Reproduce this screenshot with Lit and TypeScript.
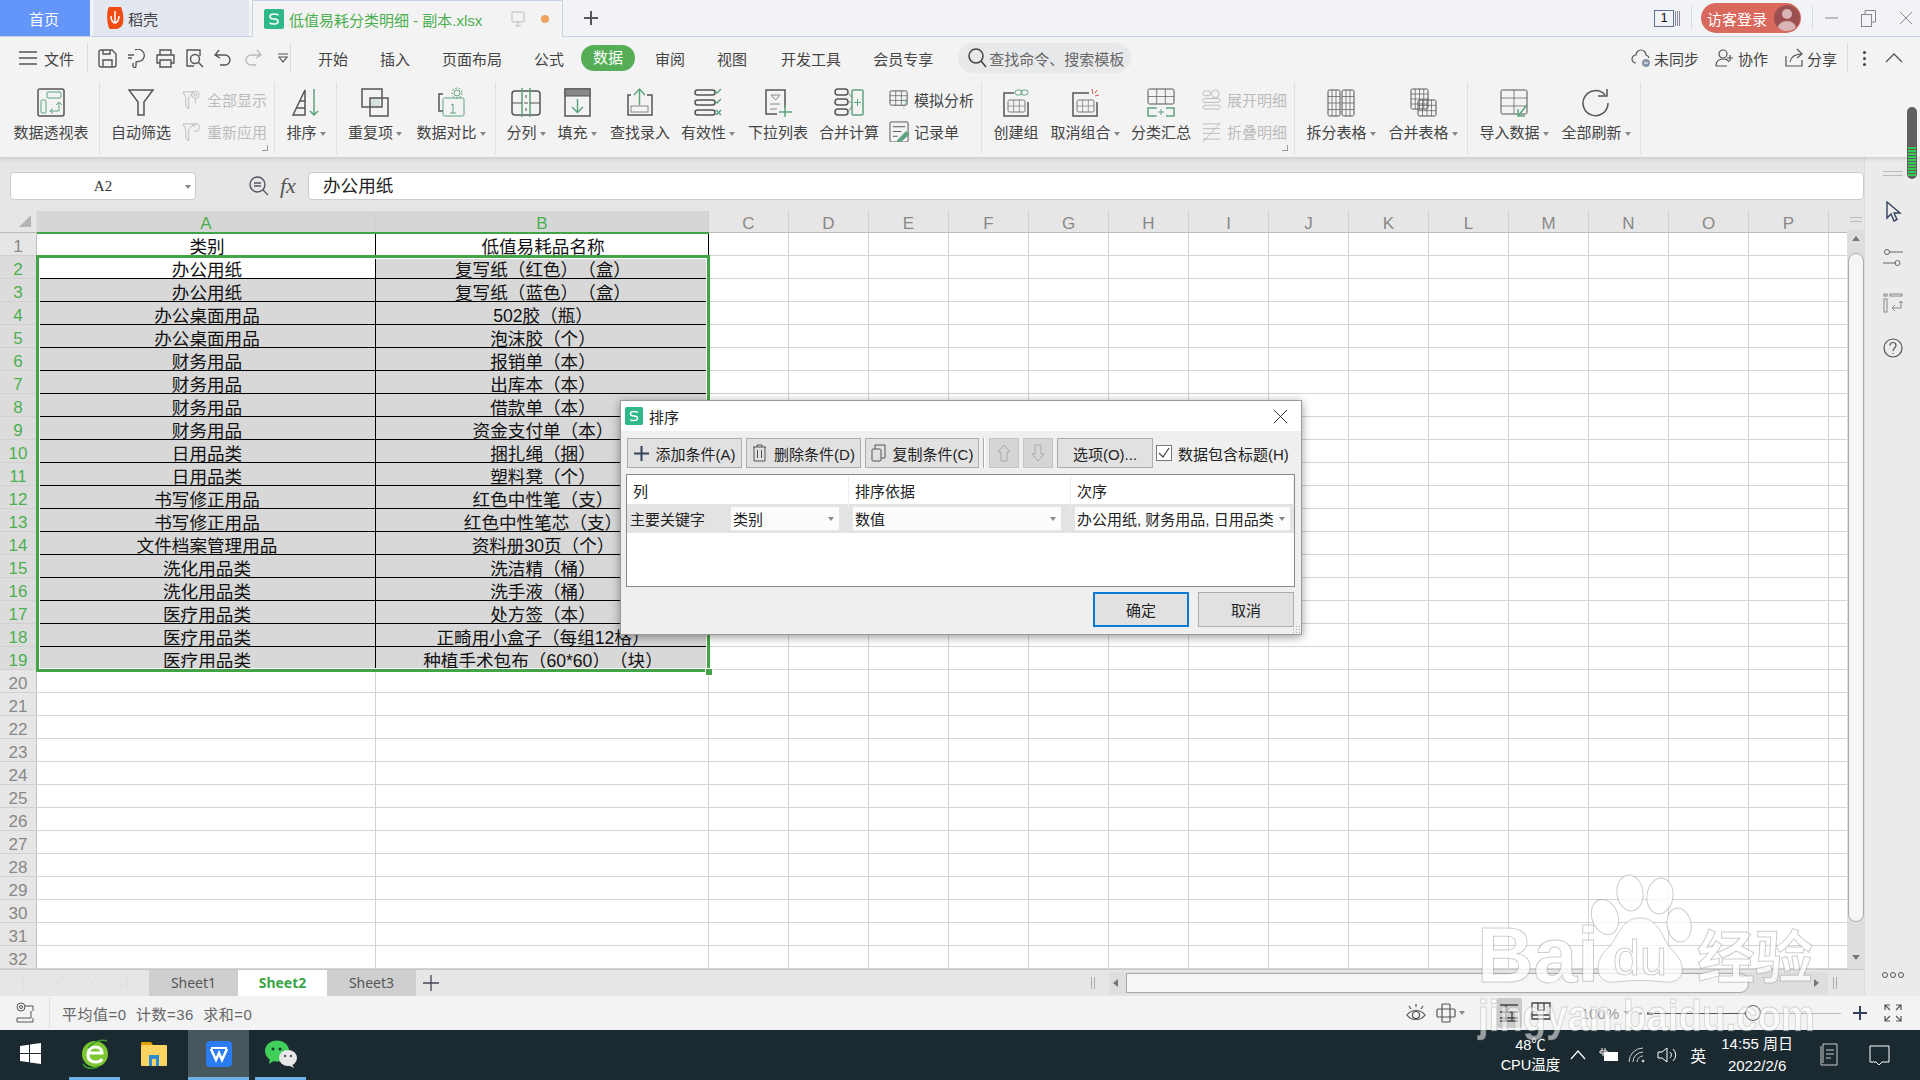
import {LitElement, html, css, svg} from 'lit';
import {customElement} from 'lit/decorators.js';

const G = '#5fa37e';
const D = '#555';

// draws a small table: outer box plus inner lines
const grid = (x: number, y: number, w: number, h: number, cols: number, rows: number, c = D) => {
  const out = [svg`<rect x=${x} y=${y} width=${w} height=${h} rx="1.5" stroke=${c} fill="none"/>`];
  for (let i = 1; i < cols; i++) {
    const px = x + (w / cols) * i;
    out.push(svg`<path d="M${px} ${y}V${y + h}" stroke=${c} fill="none" opacity=".7"/>`);
  }
  for (let i = 1; i < rows; i++) {
    const py = y + (h / rows) * i;
    out.push(svg`<path d="M${x} ${py}H${x + w}" stroke=${c} fill="none" opacity=".7"/>`);
  }
  return out;
};

const ICONS: Record<string, unknown> = {
  pivot: svg`<rect x="2" y="2" width="26" height="27" rx="2" stroke-width="1.5"/><rect x="11" y="5" width="14" height="6" rx="1" stroke=${G}/><rect x="5" y="13" width="5" height="13" rx="1" stroke=${G}/><path d="M14 24h9v-9M20 18l3-3 3 3M14 24l3-2.500M14 24l3 2.500" stroke=${G}/>`,
  filter: svg`<path d="M3 3H27L18 15V28H12V15Z" stroke-width="1.500"/>`,
  sort: svg`<path d="M2 28L14 3V28ZM9 14H14M5.500 21H14" stroke-width="1.500"/><path d="M23 2V28M19 24l4 4 4-4" stroke=${G} stroke-width="1.500"/>`,
  dup: svg`<rect x="10" y="11" width="10" height="9" fill="#d5e3da" stroke="none"/><rect x="2" y="2" width="20" height="18" stroke-width="1.500"/><rect x="10" y="11" width="18" height="18" stroke-width="1.500"/>`,
  compare: svg`<path d="M7 7H3V24H7" stroke-width="1.500"/><rect x="7" y="11" width="21" height="18" rx="1.500" stroke=${G}/><circle cx="21" cy="6" r="3" stroke=${G}/><circle cx="21" cy="6" r="5" stroke=${G} stroke-dasharray="2 1.500"/><path d="M15 18l2-1V26M14 26h6" stroke=${G}/>`,
  split: svg`<rect x="1" y="4" width="28" height="24" rx="3" stroke-width="1.500"/><path d="M11 1V31M19 1V31" stroke=${G} stroke-width="1.500"/><path d="M1 16H11M19 16H29M13 16h4M15 8v3M15 21v3" />`,
  fill: svg`<rect x="3" y="2" width="25" height="27" stroke-width="1.500"/><rect x="3" y="2" width="25" height="7" fill="#888"/><path d="M15.500 12V25M10 20l5.500 5.500L21 20" stroke=${G} stroke-width="1.500"/>`,
  lookup: svg`<path d="M6 8H3V28H27V8H22" stroke-width="1.500"/><path d="M14.500 18V3M9 8l5.500-6L20 8" stroke=${G} stroke-width="1.500"/><rect x="6" y="19" width="17" height="6" stroke="#888"/>`,
  valid: svg`<rect x="2" y="3" width="20" height="5" rx="2.500" stroke-width="1.500"/><rect x="2" y="13" width="20" height="5" rx="2.500" stroke-width="1.500"/><rect x="2" y="23" width="20" height="5" rx="2.500" stroke-width="1.500"/><path d="M22 4l2 2 4-4M22 14l2 2 4-4M23 23l5 5M28 23l-5 5" stroke=${G} stroke-width="1.500"/>`,
  drop: svg`<path d="M22 21V3H3V27H14" stroke-width="1.500"/><path d="M8 8H17L12.500 13ZM7 17H17M7 22H14" stroke="#888"/><path d="M22 18V31M16 25H29" stroke=${G} stroke-width="1.500"/>`,
  merge: svg`<rect x="1" y="2" width="13" height="6" rx="3" stroke-width="1.500"/><rect x="1" y="12" width="13" height="6" rx="3" stroke-width="1.500"/><rect x="1" y="22" width="13" height="6" rx="3" stroke-width="1.500"/><rect x="18" y="3" width="11" height="25" rx="1" stroke=${G} stroke-width="1.500"/><path d="M14 5l4 6M14 15h4M14 25l4-6" stroke="#888"/><path d="M23.500 12v7M20 15.500h7" stroke=${G}/>`,
  group: svg`<path d="M13 6H3V29H27V15" stroke-width="1.500"/>${grid(7, 13, 17, 12, 3, 2, '#777')}<rect x="14" y="3" width="7" height="5" rx="2.500" stroke=${G}/><rect x="20" y="3" width="7" height="5" rx="2.500" stroke=${G}/>`,
  ungroup: svg`<path d="M19 6H3V29H27V15" stroke-width="1.500"/>${grid(7, 13, 17, 12, 3, 2, '#777')}<path d="M22 2l1 5M29 8l-4 1M27 3l-2 3" stroke="#d9534f"/>`,
  subtotal: svg`${grid(2, 2, 26, 15, 3, 2)}<path d="M10 21H2V29H10M20 21H28V29H20" stroke=${G} stroke-width="1.500"/><path d="M10 21h1M10 29h1M15 22v6M12 25h6" stroke=${G}/>`,
  splitT: svg`${grid(2, 3, 12, 26, 3, 4)}${grid(16, 3, 12, 26, 3, 4)}`,
  mergeT: svg`${grid(3, 2, 17, 20, 4, 4)}${grid(10, 13, 18, 16, 4, 3)}`,
  importD: svg`${grid(2, 3, 26, 24, 2, 3)}<path d="M28 18L19 29M19 22V29H26" stroke=${G} stroke-width="1.500"/>`,
  refresh: svg`<path d="M24 8A12.500 12.500 0 1 0 27 16" stroke-width="1.500"/><path d="M17 7H26V0" stroke-width="1.500" transform="translate(0 2)"/>`,
  wif: svg`${grid(1, 2, 18, 15, 3, 3)}<path d="M13 14c0-3 5-3 5 0 0 2-2.500 2-2.500 4.500M15.500 20v1" stroke=${G}/>`,
  rec: svg`<rect x="1" y="1" width="19" height="21" rx="1"/><path d="M4 6H17M4 11H13M4 16H9"/><path d="M9 20L18 11l3 3-9 8H9Z" fill=${G} stroke=${G}/>`,
  show: svg`<path d="M1 3H12L7 9V21L4 18V9ZM14 10V15"/><circle cx="14" cy="6" r="4"/><circle cx="14" cy="6" r="1.500"/>`,
  reapply: svg`<path d="M1 3H12L7 9V21L4 18V9Z"/><path d="M12 10a4 4 0 1 0-1-5M14 2v3h-3M15 7l1 1"/>`,
  expand: svg`<rect x="1" y="2" width="8" height="5" rx="2.500"/><circle cx="14" cy="5" r="4"/><rect x="1" y="10" width="18" height="4" rx="2"/><rect x="1" y="17" width="18" height="4" rx="2"/>`,
  fold: svg`<path d="M1 3H19M1 8H19M1 13H19M1 19H19M1 22L19 2"/>`,
};

const ico = (name: string, size = 30, off = false) => html`<svg class="ic ${off ? 'off' : ''}" width=${size} height=${size} viewBox="0 0 ${size === 30 ? 30 : 22} ${size === 30 ? 30 : 22}">${ICONS[name]}</svg>`;

const sIcon = (size: number) => html`<svg width=${size} height=${size} viewBox="0 0 20 20"><rect width="20" height="20" rx="2" fill="#2fb888"/><path d="M14 6.500C14 5.500 12 5 10 5S6 5.500 6 7.500 8 10 10 10s4 .5 4 2.500-2 2.500-4 2.500-4-.5-4-1.500" fill="none" stroke="#fff" stroke-width="1.500"/></svg>`;

type Big = {kind: 'big'; w: number; icon: string; label: string; caret?: boolean};
type Stack = {kind: 'stack'; w: number; off?: boolean; rows: [string, string][]; ml?: number};
type Group = {w: number; items: (Big | Stack)[]; corner?: boolean};

const big = (w: number, icon: string, label: string, caret = false): Big => ({kind: 'big', w, icon, label, caret});

const GROUPS: Group[] = [
  {w: 100, items: [big(102, 'pivot', '数据透视表')]},
  {w: 175, corner: true, items: [big(82, 'filter', '自动筛选'), {kind: 'stack', w: 93, off: true, rows: [['show', '全部显示'], ['reapply', '重新应用']]}]},
  {w: 62, items: [big(62, 'sort', '排序', true)]},
  {w: 159, items: [big(76, 'dup', '重复项', true), big(76, 'compare', '数据对比', true)]},
  {w: 486, items: [big(60, 'split', '分列', true), big(42, 'fill', '填充', true), big(84, 'lookup', '查找录入'), big(52, 'valid', '有效性', true), big(88, 'drop', '下拉列表'), big(54, 'merge', '合并计算'),
    {kind: 'stack', w: 93, ml: 13, rows: [['wif', '模拟分析'], ['rec', '记录单']]}]},
  {w: 313, corner: true, items: [big(68, 'group', '创建组'), big(70, 'ungroup', '取消组合', true), big(82, 'subtotal', '分类汇总'), {kind: 'stack', w: 93, off: true, rows: [['expand', '展开明细'], ['fold', '折叠明细']]}]},
  {w: 173, items: [big(92, 'splitT', '拆分表格', true), big(72, 'mergeT', '合并表格', true)]},
  {w: 173, items: [big(92, 'importD', '导入数据', true), big(72, 'refresh', '全部刷新', true)]},
];

const TABS = ['开始', '插入', '页面布局', '公式', '数据', '审阅', '视图', '开发工具', '会员专享'];

const ROWS: [string, string][] = [
  ['类别', '低值易耗品名称'],
  ['办公用纸', '复写纸（红色）（盒）'],
  ['办公用纸', '复写纸（蓝色）（盒）'],
  ['办公桌面用品', '502胶（瓶）'],
  ['办公桌面用品', '泡沫胶（个）'],
  ['财务用品', '报销单（本）'],
  ['财务用品', '出库本（本）'],
  ['财务用品', '借款单（本）'],
  ['财务用品', '资金支付单（本）'],
  ['日用品类', '捆扎绳（捆）'],
  ['日用品类', '塑料凳（个）'],
  ['书写修正用品', '红色中性笔（支）'],
  ['书写修正用品', '红色中性笔芯（支）'],
  ['文件档案管理用品', '资料册30页（个）'],
  ['洗化用品类', '洗洁精（桶）'],
  ['洗化用品类', '洗手液（桶）'],
  ['医疗用品类', '处方签（本）'],
  ['医疗用品类', '正畸用小盒子（每组12格）'],
  ['医疗用品类', '种植手术包布（60*60）（块）'],
];

const COLS = ['C', 'D', 'E', 'F', 'G', 'H', 'I', 'J', 'K', 'L', 'M', 'N', 'O', 'P'];

@customElement('app-root')
export class AppRoot extends LitElement {
  static styles = css`
    :host {
      display: block;
      width: 1920px;
      height: 1080px;
      position: relative;
      overflow: hidden;
      font-family: "Liberation Sans", "Noto Sans CJK SC", sans-serif;
      font-size: 15px;
      color: #444;
      background: #f3f3f3;
      text-spacing-trim: space-all;
    }
    svg { display: block; flex: none; }
    .ic { fill: none; stroke: #555; }
    .ic.off { stroke: #bbb; }
    .caret { display: inline-block; width: 0; height: 0; border: 3.5px solid transparent; border-top: 4px solid #888; border-bottom: 0; margin-left: 3px; vertical-align: middle; }

    .title { height: 37px; display: flex; background: #f1f3f7; border-bottom: 1px solid #c5d3e3; box-sizing: border-box; align-items: stretch; }
    .t-home { width: 90px; background: #6495f9; color: #fff; display: flex; align-items: center; justify-content: center; padding-right: 2px; box-sizing: border-box; }
    .t-doc { width: 156px; margin-left: 3px; background: #e3e7f0; display: flex; align-items: center; padding-left: 13px; box-sizing: border-box; gap: 4px; }
    .t-active { width: 311px; margin-left: 3px; height: 37px; background: #f3f3f3; border: 1px solid #c5d3e3; border-bottom: 0; box-sizing: border-box; display: flex; align-items: center; padding-left: 11px; color: #4caf50; }
    .t-active .name { margin-left: 5px; width: 221px; }
    .dot { width: 8px; height: 8px; border-radius: 50%; background: #f0a35e; margin-left: 15px; }
    .t-plus { margin-left: 20px; align-self: center; }
    .t-right { margin-left: auto; display: flex; align-items: center; }
    .one { width: 20px; height: 17px; border: 1.5px solid #5d7391; box-sizing: border-box; color: #111; font-size: 13px; line-height: 14px; text-align: center; }
    .one-bars { width: 6px; height: 15px; margin-left: 1px; background: repeating-linear-gradient(90deg, #889 0 1px, transparent 1px 2px); }
    .vsep { width: 1px; height: 24px; background: #d9dce2; }
    .vsep.first { margin-left: 10px; }
    .login { width: 100px; height: 30px; border-radius: 15px; background: #d9695c; color: #fff; display: flex; align-items: center; padding-left: 6px; box-sizing: border-box; margin: 0 11px 0 9px; font-size: 15px; justify-content: space-between; }
    .avatar { width: 26px; height: 26px; border-radius: 50%; background: #9c4f50; overflow: hidden; margin-right: 1px; }
    .win { display: flex; align-items: center; margin-left: 12px; gap: 23px; margin-right: 7px; }

    .menu { height: 42px; display: flex; align-items: center; background: #f3f3f3; }
    .file { display: flex; align-items: center; padding-left: 19px; width: 68px; gap: 7px; }
    .msep { width: 1px; height: 30px; background: #ddd; flex: none; }
    .quick { display: flex; align-items: center; padding-left: 10px; gap: 10px; width: 202px; box-sizing: border-box; }
    .quick .more { margin-left: 5px; }
    .tab-gap { width: 11px; flex: none; }
    .tab { padding: 0 16px; white-space: nowrap; }
    .tab.sel { padding: 3px 12px; margin: 0 4px 0 1px; background: #55ae56; color: #fff; border-radius: 13px; line-height: 20px; }
    .tab.dev { margin-left: 2px; }
    .search { margin-left: 9px; width: 173px; height: 30px; border-radius: 15px; background: #e8e9eb; display: flex; align-items: center; padding-left: 9px; box-sizing: border-box; gap: 2px; color: #666; white-space: nowrap; }
    .m-right { margin-left: auto; display: flex; align-items: center; }
    .m-act { display: flex; align-items: center; gap: 3px; margin-right: 16px; }
    .m-last { margin-left: -6px; }
    .dots { width: 3px; height: 3px; background: #444; border-radius: 50%; box-shadow: 0 -6px #444, 0 6px #444; margin: 0 19px 0 15px; }
    .collapse { margin-right: 17px; }

    .ribbon { height: 78px; display: flex; background: #f3f3f3; position: relative; z-index: 2; box-shadow: 0 2px 4px rgba(0,0,0,.12); }
    .group { height: 72px; border-right: 1px solid #e0e0e0; box-sizing: border-box; display: flex; position: relative; margin-top: 3px; flex: none; }
    .big { display: flex; flex-direction: column; align-items: center; flex: none; white-space: nowrap; padding-top: 5px; }
    .big span.lbl { margin-top: 5px; line-height: 22px; }
    .stack { display: flex; flex-direction: column; flex: none; padding-top: 6px; gap: 10px; white-space: nowrap; }
    .srow { display: flex; align-items: center; height: 22px; gap: 4px; }
    .stack.off { color: #bbb; }
    .corner { position: absolute; right: 6px; bottom: 3px; width: 5px; height: 5px; border-right: 1px solid #999; border-bottom: 1px solid #999; }

    .main { display: flex; height: 839px; }
    .left { width: 1864px; display: flex; flex-direction: column; flex: none; }
    .side { flex: 1; background: #ebebeb; border-left: 1px solid #ddd; display: flex; flex-direction: column; align-items: center; }
    .side-lines { width: 20px; height: 3px; border-top: 1px solid #bbb; border-bottom: 1px solid #bbb; margin-top: 14px; }
    .side svg { margin-top: 24px; }
    .side svg.cursor { margin-top: 25px; margin-left: 3px; }
    .side svg.help { margin-top: 25px; }
    .side .more { margin-top: auto; margin-bottom: 18px; display: flex; gap: 2px; }
    .side .more i { width: 4px; height: 4px; border: 1px solid #555; border-radius: 50%; }

    .fbar { height: 54px; background: #e6e6e6; display: flex; align-items: center; padding-top: 4px; box-sizing: border-box; }
    .namebox { width: 186px; height: 28px; margin-left: 10px; background: #fff; border: 1px solid #ccc; border-radius: 4px; box-sizing: border-box; display: flex; align-items: center; justify-content: center; font-family: "Liberation Serif", serif; color: #333; position: relative; }
    .namebox .caret { position: absolute; right: 4px; top: 12px; }
    .zoom { margin-left: 52px; }
    .fx { font-family: "Liberation Serif", serif; font-style: italic; font-size: 22px; color: #555; margin-left: 10px; width: 28px; }
    .finput { width: 1556px; height: 28px; background: #fff; border: 1px solid #ccc; border-radius: 4px; box-sizing: border-box; padding-left: 14px; line-height: 27px; font-size: 17.600px; color: #222; }

    .sheet { height: 758px; display: flex; background: #fff; }
    .grid { width: 1847px; position: relative; flex: none; overflow: hidden; }
    .row { display: flex; height: 23px; box-sizing: border-box; }
    .row.head { height: 22px; background: #e6e6e6; border-bottom: 1px solid #bbb; }
    .corner-cell { width: 37px; flex: none; position: relative; border-right: 1px solid #ddd; box-sizing: border-box; }
    .corner-cell::after { content: ""; position: absolute; right: 5px; bottom: 5px; border-style: solid; border-width: 0 0 12px 12px; border-color: transparent transparent #b5b5b5 transparent; }
    .ch { flex: none; text-align: center; border-right: 1px solid #d0d0d0; box-sizing: border-box; font-size: 17px; line-height: 25px; color: #888; width: 80px; overflow: hidden; }
    .ch.sel { background: #d6d6d6; color: #4caf50; }
    .ch.a { width: 339px; }
    .ch.b { width: 333px; }
    .rh { width: 37px; flex: none; background: #e6e6e6; border-right: 1px solid #c0c0c0; border-bottom: 1px solid #d0d0d0; box-sizing: border-box; text-align: center; font-size: 17px; line-height: 27px; color: #888; overflow: hidden; }
    .rh.sel { background: #dcdcdc; color: #4caf50; }
    .c { flex: none; box-sizing: border-box; border-right: 1px solid #d4d4d4; border-bottom: 1px solid #d4d4d4; width: 80px; overflow: hidden; }
    .c.d { text-align: center; font-size: 17.600px; line-height: 29px; padding-left: 2px; color: #111; border-right-color: #000; border-bottom-color: #000; background: #d8d8d8; white-space: nowrap; }
    .c.a { width: 339px; }
    .c.b { width: 333px; }
    .c.q { width: 18px; border-right: 0; }
    .c.w { background: #fff; }
    .sel-box { position: absolute; left: 36px; top: 44px; width: 674px; height: 417px; border: 3px solid #43a347; box-sizing: border-box; box-shadow: inset 0 0 0 1px #fff; }
    .sel-top { position: absolute; left: 37px; top: 21px; width: 672px; height: 2px; background: #43a347; }
    .sel-h { position: absolute; left: 705px; top: 457px; width: 6px; height: 6px; background: #43a347; border: 1px solid #fff; }

    .vs { width: 17px; flex: none; background: #e6e6e6; display: flex; flex-direction: column; align-items: center; }
    .vs-lines { width: 12px; height: 3px; border-top: 1px solid #bbb; border-bottom: 1px solid #bbb; margin-top: 6px; }
    .vs-track { margin-top: 7px; width: 17px; flex: 1; background: #dedede; display: flex; flex-direction: column; align-items: center; }
    .arr-up, .arr-down { width: 0; height: 0; border: 4px solid transparent; margin: 7px 0; }
    .arr-up { border-bottom: 5px solid #777; border-top: 0; }
    .arr-down { border-top: 5px solid #777; border-bottom: 0; margin-top: auto; margin-bottom: 9px; }
    .vs-thumb { width: 16px; height: 669px; background: #f6f6f6; border: 1px solid #aaa; border-radius: 8px; box-sizing: border-box; margin-top: 5px; }

    .stabs { height: 27px; background: #e6e6e6; display: flex; align-items: stretch; border-top: 1px solid #c8c8c8; box-sizing: border-box; }
    .nav { width: 149px; display: flex; align-items: center; padding-left: 22px; box-sizing: border-box; gap: 22px; color: #d0d0d0; }
    .st { width: 89px; background: #cfcfcf; text-align: center; line-height: 26px; font-family: "Noto Sans", sans-serif; font-size: 14px; color: #555; }
    .st.on { background: #fff; color: #3aa648; font-weight: 700; }
    .st-plus { margin: 0 0 0 6px; align-self: center; }
    .hs { margin-left: auto; display: flex; align-items: center; width: 773px; height: 26px; }
    .hs-lines { width: 4px; height: 12px; border-left: 1px solid #aaa; border-right: 1px solid #aaa; box-sizing: border-box; flex: none; }
    .hs-track { width: 719px; margin-left: 14px; height: 22px; background: #dedede; display: flex; align-items: center; flex: none; }
    .arr-l, .arr-r { width: 0; height: 0; border: 4px solid transparent; flex: none; }
    .arr-l { border-right: 5px solid #777; border-left: 0; margin: 0 8px 0 4px; }
    .arr-r { border-left: 5px solid #777; border-right: 0; margin-left: auto; margin-right: 9px; }
    .hs-thumb { width: 623px; height: 20px; background: #f6f6f6; border: 1px solid #aaa; border-radius: 0 9px 9px 0; box-sizing: border-box; flex: none; }
    .hs-end { margin-left: 5px; }

    .status { height: 34px; display: flex; align-items: center; background: #f3f3f3; color: #666; }
    .status .sp { width: 1px; height: 30px; background: #e0e0e0; margin: 0 12px 0 14px; }
    .s-info { letter-spacing: .5px; }
    .s-tool { margin-left: 15px; }
    .s-right { margin-left: auto; display: flex; align-items: center; }
    .s-cross { margin-left: 9px; }
    .view { width: 25px; height: 30px; background: #cbcbcb; border-radius: 2px; display: flex; align-items: center; justify-content: center; margin-left: 32px; }
    .s-page { margin-left: 9px; }
    .pct { color: #999; font-size: 15px; margin-left: 30px; }
    .s-caret { margin-left: 5px; }
    .s-minus { margin-left: 9px; }
    .slider { width: 188px; height: 1px; background: #bbb; position: relative; display: flex; }
    .slider .fillbar { width: 100px; height: 1px; background: #555; }
    .slider .knob { position: absolute; left: 92px; top: -8px; width: 16px; height: 16px; border-radius: 50%; background: #f3f3f3; border: 1.500px solid #666; box-sizing: border-box; }
    .s-plus { margin-left: 12px; }
    .s-full { margin: 0 18px 0 17px; }

    .taskbar { height: 50px; background: #1b2a30; display: flex; align-items: center; color: #fff; position: relative; }
    .tb-app { height: 50px; box-sizing: border-box; display: flex; align-items: center; justify-content: center; border-bottom: 3px solid transparent; flex: none; }
    .tb-app.run { border-bottom-color: #6cb0e8; }
    .tb-app.act { background: #48575d; }
    .tb-start { width: 69px; padding-right: 8px; }
    .tb-ie { width: 51px; }
    .tb-folder { width: 68px; }
    .tb-wps { width: 61px; }
    .tb-chat { width: 51px; margin-left: 6px; }
    .tb-right { margin-left: auto; display: flex; align-items: center; }
    .cpu { text-align: center; font-size: 14.500px; line-height: 20px; }
    .tr-chev { margin-left: 10px; }
    .tr-power { margin-left: 13px; }
    .tr-wifi { margin-left: 9px; }
    .tr-vol { margin-left: 11px; }
    .clock { text-align: center; font-size: 15px; line-height: 22px; margin: 0 0 0 15px; }
    .ime { font-size: 16px; margin-left: 13px; }
    .tr-notes { margin-left: 25px; }
    .tr-chat { margin: 0 30px 0 29px; }

    .dialog { position: absolute; left: 620px; top: 400px; width: 682px; height: 235px; background: #efefef; border: 1px solid #9a9a9a; box-sizing: border-box; box-shadow: 0 2px 9px rgba(0,0,0,.4); z-index: 5; color: #222; }
    .d-title { height: 30px; background: #fff; display: flex; align-items: center; padding-left: 4px; gap: 6px; }
    .d-close { margin-left: auto; margin-right: 14px; }
    .d-tools { display: flex; padding: 7px 0 0 6px; align-items: center; }
    .btn { height: 30px; box-sizing: border-box; background: #e1e1e1; border: 1px solid #adadad; display: flex; align-items: center; justify-content: center; gap: 7px; white-space: nowrap; flex: none; }
    .btn.dis { background: #d5d5d5; border-color: #c4c4c4; }
    .btn.w115 { width: 115px; }
    .btn.w114 { width: 114px; }
    .btn.w30 { width: 30px; }
    .btn.w96 { width: 96px; }
    .btn.ml { margin-left: 4px; }
    .btn-sep { width: 2px; height: 30px; background: #fff; border-left: 1px solid #aaa; box-sizing: border-box; margin: 0 4px; }
    .chk { width: 16px; height: 16px; border: 1px solid #777; background: #fff; box-sizing: border-box; margin: 0 6px 0 3px; flex: none; }
    .chk-lbl { white-space: nowrap; }
    .d-table { margin: 6px 0 0 5px; width: 669px; height: 113px; background: #fff; border: 1px solid #8a8a8a; box-sizing: border-box; }
    .d-hd { display: grid; grid-template-columns: 222px 222px 1fr; height: 29px; line-height: 33px; }
    .d-hd div { padding-left: 6px; border-right: 1px solid #eee; }
    .d-row { display: grid; grid-template-columns: 222px 222px 1fr; height: 29px; background: #e3e3e3; align-items: center; }
    .d-cell { display: flex; align-items: center; padding-left: 3px; white-space: nowrap; }
    .combo { height: 25px; background: #fcfcfc; border: 1px solid #e4e4e4; box-sizing: border-box; display: flex; align-items: center; padding-left: 2px; position: relative; overflow: hidden; font-size: 15px; }
    .combo.key { width: 110px; margin-left: 25px; }
    .combo.basis { width: 210px; }
    .combo.order { width: 217px; }
    .combo .caret { position: absolute; right: 5px; top: 10px; }
    .d-foot { display: flex; justify-content: flex-end; gap: 9px; margin: 5px 7px 0 0; }
    .d-foot .btn { width: 96px; height: 35px; }
    .d-foot .btn.def { border: 2px solid #0a7ad4; }
    .grip { position: absolute; right: 1px; bottom: 1px; width: 8px; height: 8px; background: radial-gradient(#aaa 1px, transparent 1px) 0 0 / 3px 3px; }

    .speed { position: absolute; left: 1907px; top: 107px; width: 10px; height: 72px; border-radius: 5px; background: #5f5f5f; z-index: 6; display: flex; align-items: flex-end; justify-content: center; }
    .speed i { display: block; width: 8px; height: 29px; margin-bottom: 3px; background: repeating-linear-gradient(180deg, #33cc55 0 2px, #5f5f5f 2px 3px); }
    .mark { position: absolute; left: 1460px; top: 870px; z-index: 7; pointer-events: none; filter: blur(.4px); }
    .mark g, .mark text { fill: rgba(255,255,255,.78); stroke: rgba(130,130,130,.4); stroke-width: 1; }
    .mark .bai { font: 700 78px "Liberation Sans", sans-serif; }
    .mark .du { font: 400 50px "Liberation Sans", sans-serif; }
    .mark .jy { font: 700 57px "Noto Sans CJK SC", sans-serif; }
    .mark .url { font: 700 45px "Liberation Sans", sans-serif; fill: rgba(255,255,255,.55); stroke: rgba(130,130,130,.3); }
  `;

  renderTitle() {
    return html`<div class="title">
      <div class="t-home">首页</div>
      <div class="t-doc">
        <svg width="18" height="24" viewBox="0 0 18 24"><path d="M3 1H15C17 5 18 12 17 17 16 21 13 23 8 23H4C1 21 0 5 3 1Z" fill="#f04a15"/><path d="M9 5V17M5 10C5 14 7 17 9 17 11 17 13 14 13 10" fill="none" stroke="#fff" stroke-width="1.500"/></svg>
        <span>稻壳</span>
      </div>
      <div class="t-active">
        ${sIcon(20)}
        <span class="name">低值易耗分类明细 - 副本.xlsx</span>
        <svg width="16" height="16" viewBox="0 0 16 16" fill="none" stroke="#bbb"><rect x="2" y="1" width="12" height="10" rx="1"/><path d="M8 11V14M5 15H11"/></svg>
        <span class="dot"></span>
      </div>
      <svg class="t-plus" width="16" height="16" viewBox="0 0 16 16"><path d="M8 1V15M1 8H15" stroke="#555" stroke-width="2"/></svg>
      <div class="t-right">
        <div class="one">1</div><div class="one-bars"></div>
        <div class="vsep first"></div>
        <div class="login">访客登录
          <div class="avatar"><svg width="26" height="26" viewBox="0 0 26 26"><circle cx="13" cy="9" r="5" fill="#d8b4b4"/><ellipse cx="13" cy="23" rx="9" ry="7" fill="#d8b4b4"/></svg></div>
        </div>
        <div class="vsep"></div>
        <div class="win">
          <svg width="13" height="2" viewBox="0 0 13 2"><path d="M0 1H13" stroke="#888"/></svg>
          <svg width="15" height="17" viewBox="0 0 15 17" fill="none" stroke="#888"><rect x=".5" y="4.500" width="10" height="12"/><path d="M4 4V.5H14.500V12H11"/></svg>
          <svg width="14" height="14" viewBox="0 0 14 14"><path d="M1 1L13 13M13 1L1 13" stroke="#888"/></svg>
        </div>
      </div>
    </div>`;
  }

  renderMenu() {
    return html`<div class="menu">
      <div class="file">
        <svg width="18" height="14" viewBox="0 0 18 14"><path d="M0 1H18M0 7H18M0 13H18" stroke="#555" stroke-width="1.500"/></svg>
        <span>文件</span>
      </div>
      <div class="msep"></div>
      <div class="quick">
        <svg class="ic" width="19" height="19" viewBox="0 0 19 19"><path d="M1 3A2 2 0 0 1 3 1H14L18 5V16A2 2 0 0 1 16 18H3A2 2 0 0 1 1 16ZM5 18V11H14V18M5 1V5H12V1" stroke-width="1.400"/></svg>
        <svg class="ic" width="19" height="19" viewBox="0 0 19 19"><path d="M1 6H7M1 9H5M8 1A6 6 0 0 1 14 12L9 13V17A1.500 1.500 0 0 1 6 17V14" stroke-width="1.300"/></svg>
        <svg class="ic" width="19" height="19" viewBox="0 0 19 19"><path d="M4 6V1H15V6M4 14H1V6H18V14H15M4 11H15V18H4Z" stroke-width="1.400"/></svg>
        <svg class="ic" width="19" height="19" viewBox="0 0 19 19"><path d="M9 17H2V1H15V7" stroke-width="1.400"/><circle cx="10" cy="10" r="4.500" stroke-width="1.400"/><path d="M13.500 13.500L18 18" stroke-width="1.400"/></svg>
        <svg class="ic" width="19" height="19" viewBox="0 0 19 19"><path d="M5 1L1 6 6 9M2 6H11A5 5 0 0 1 11 16H6" stroke-width="1.400"/></svg>
        <svg class="ic off" width="19" height="19" viewBox="0 0 19 19"><path d="M14 1L18 6 13 9M17 6H8A5 5 0 0 0 8 16H13" stroke-width="1.400"/></svg>
        <svg class="ic more" width="12" height="12" viewBox="0 0 12 12"><path d="M1 2H11M2 5L6 10 10 5Z" stroke-width="1.200"/></svg>
      </div>
      <div class="msep"></div>
      <div class="tab-gap"></div>
      ${TABS.map(t => html`<div class="tab ${t === '数据' ? 'sel' : ''} ${t === '开发工具' ? 'dev' : ''}">${t}</div>`)}
      <div class="search">
        <svg width="20" height="22" viewBox="0 0 20 22" fill="none" stroke="#444" stroke-width="1.500"><circle cx="9" cy="9" r="7"/><path d="M14 14L19 20"/></svg>
        <span>查找命令、搜索模板</span>
      </div>
      <div class="m-right">
        <div class="m-act">
          <svg width="20" height="20" viewBox="0 0 20 20"><path d="M5 15A4 4 0 0 1 5 7 5 5 0 0 1 15 7 4 4 0 0 1 18 10" fill="none" stroke="#555" stroke-width="1.200"/><circle cx="15" cy="15" r="4" fill="#8898aa"/><path d="M13 15H17" stroke="#fff"/></svg>
          <span>未同步</span>
        </div>
        <div class="m-act">
          <svg width="20" height="20" viewBox="0 0 20 20" fill="none" stroke="#555" stroke-width="1.200"><circle cx="8" cy="6" r="4"/><path d="M1 18C1 13 4 11 8 11 11 11 13 12 14 14M1 18H12M15 7V13M12 10H18"/></svg>
          <span>协作</span>
        </div>
        <div class="m-act">
          <svg width="20" height="20" viewBox="0 0 20 20" fill="none" stroke="#555" stroke-width="1.200"><path d="M2 8V18H18V12M13 1L18 6 13 10M18 6C11 6 7 9 6 14"/></svg>
          <span>分享</span>
        </div>
        <div class="msep m-last"></div>
        <div class="dots"></div>
        <svg class="collapse" width="18" height="10" viewBox="0 0 18 10"><path d="M1 9L9 1 17 9" fill="none" stroke="#555" stroke-width="1.300"/></svg>
      </div>
    </div>`;
  }

  renderRibbon() {
    return html`<div class="ribbon">
      ${GROUPS.map(g => html`<div class="group" style="width:${g.w}px">
        ${g.items.map(it => it.kind === 'big'
          ? html`<div class="big" style="width:${it.w}px">${ico(it.icon)}<span class="lbl">${it.label}${it.caret ? html`<i class="caret"></i>` : ''}</span></div>`
          : html`<div class="stack ${it.off ? 'off' : ''}" style="width:${it.w}px;margin-left:${it.ml || 0}px">
              ${it.rows.map(r => html`<div class="srow">${ico(r[0], 21, it.off)}<span>${r[1]}</span></div>`)}
            </div>`)}
        ${g.corner ? html`<div class="corner"></div>` : ''}
      </div>`)}
    </div>`;
  }

  renderGrid() {
    return html`<div class="grid">
      <div class="row head">
        <div class="corner-cell"></div>
        <div class="ch sel a">A</div>
        <div class="ch sel b">B</div>
        ${COLS.map(c => html`<div class="ch">${c}</div>`)}
      </div>
      ${Array.from({length: 32}, (_, i) => {
        const d = ROWS[i];
        return html`<div class="row">
          <div class="rh ${i >= 1 && i <= 18 ? 'sel' : ''}">${i + 1}</div>
          ${d
            ? html`<div class="c d a ${i < 2 ? 'w' : ''}">${d[0]}</div><div class="c d b ${i === 0 ? 'w' : ''}">${d[1]}</div>`
            : html`<div class="c a"></div><div class="c b"></div>`}
          ${COLS.map(() => html`<div class="c"></div>`)}
          <div class="c q"></div>
        </div>`;
      })}
      <div class="sel-top"></div>
      <div class="sel-box"></div>
      <div class="sel-h"></div>
    </div>`;
  }

  renderSheetTabs() {
    return html`<div class="stabs">
      <div class="nav">
        <svg width="12" height="16" viewBox="0 0 12 16" fill="none" stroke="#ddd"><path d="M1 1V15M11 1L4 8 11 15"/></svg>
        <svg width="8" height="16" viewBox="0 0 8 16" fill="none" stroke="#ddd"><path d="M7 1L1 8 7 15"/></svg>
        <svg width="8" height="16" viewBox="0 0 8 16" fill="none" stroke="#ddd"><path d="M1 1L7 8 1 15"/></svg>
        <svg width="12" height="16" viewBox="0 0 12 16" fill="none" stroke="#ddd"><path d="M11 1V15M1 1L8 8 1 15"/></svg>
      </div>
      <div class="st">Sheet1</div>
      <div class="st on">Sheet2</div>
      <div class="st">Sheet3</div>
      <svg class="st-plus" width="18" height="18" viewBox="0 0 18 18"><path d="M9 1V17M1 9H17" stroke="#445" stroke-width="1.300"/></svg>
      <div class="hs">
        <div class="hs-lines"></div>
        <div class="hs-track">
          <i class="arr-l"></i>
          <div class="hs-thumb"></div>
          <i class="arr-r"></i>
        </div>
        <div class="hs-lines hs-end"></div>
      </div>
    </div>`;
  }

  renderStatus() {
    return html`<div class="status">
      <svg class="s-tool" width="20" height="22" viewBox="0 0 20 22" fill="none" stroke="#555"><circle cx="6" cy="5" r="4"/><circle cx="6" cy="5" r="1.500"/><path d="M10 4H18V9M16 9V16H2V20H18V16"/></svg>
      <div class="sp"></div>
      <span class="s-info">平均值=0&nbsp;&nbsp;计数=36&nbsp;&nbsp;求和=0</span>
      <div class="s-right">
        <svg width="22" height="20" viewBox="0 0 22 20" fill="none" stroke="#555" stroke-width="1.200"><path d="M2 12C6 6 16 6 20 12 16 18 6 18 2 12Z"/><circle cx="11" cy="12" r="3.500"/><path d="M11 1V4M4 3L6 6M18 3L16 6"/></svg>
        <svg class="s-cross" width="20" height="20" viewBox="0 0 20 20" fill="none" stroke="#555" stroke-width="1.200"><rect x="6" y="1" width="8" height="18" rx="1"/><rect x="1" y="6" width="18" height="8" rx="1"/></svg>
        <i class="caret"></i>
        <div class="view">
          <svg width="20" height="20" viewBox="0 0 20 20" fill="none" stroke="#444" stroke-width="1.300"><path d="M1 2H19M1 9H19M1 15H19M7 2V18M13 9V18M1 18H19"/></svg>
        </div>
        <svg class="s-page" width="20" height="22" viewBox="0 0 20 22" fill="none" stroke="#444" stroke-width="1.300"><path d="M1 1H19V17H1ZM7 1V8H13V1M1 13H19"/></svg>
        <span class="pct">100%</span>
        <i class="caret s-caret"></i>
        <svg class="s-minus" width="14" height="3" viewBox="0 0 14 3"><path d="M0 1.500H3M8 1.500H14" stroke="#445" stroke-width="1.800"/></svg>
        <div class="slider"><div class="fillbar"></div><div class="knob"></div></div>
        <svg class="s-plus" width="14" height="14" viewBox="0 0 14 14"><path d="M7 0V14M0 7H14" stroke="#33415c" stroke-width="2"/></svg>
        <svg class="s-full" width="18" height="18" viewBox="0 0 18 18" fill="none" stroke="#555" stroke-width="1.200"><path d="M1 6V1H6M1 1L6 6M12 1H17V6M17 1L12 6M1 12V17H6M1 17L6 12M17 12V17H12M17 17L12 12"/></svg>
      </div>
    </div>`;
  }

  renderTaskbar() {
    return html`<div class="taskbar">
      <div class="tb-app tb-start">
        <svg width="21" height="21" viewBox="0 0 21 21" fill="#fff"><path d="M0 3L9 1.700V10H0ZM10 1.500L21 0V10H10ZM0 11H9V19.300L0 18ZM10 11H21V21L10 19.500Z"/></svg>
      </div>
      <div class="tb-app run tb-ie">
        <svg width="30" height="32" viewBox="0 0 30 32"><circle cx="15" cy="16" r="13" fill="#7dc832"/><path d="M8 15H22C22 11 19 9 15 9S8 12 8 17 11 24 16 24C19 24 21 23 22 21" fill="none" stroke="#fff" stroke-width="3"/><path d="M27 3C22 1 14 3 8 10M3 26C6 31 12 31 18 29" fill="none" stroke="#3a9a28" stroke-width="1.500"/></svg>
      </div>
      <div class="tb-app tb-folder">
        <svg width="28" height="26" viewBox="0 0 28 26"><path d="M1 2A1 1 0 0 1 2 1H11L13 4H1Z" fill="#e0a000"/><rect x="1" y="4" width="26" height="21" rx="1" fill="#fcd462"/><path d="M9 25V14H19V25H16V18H12V25Z" fill="#2b8dd6"/></svg>
      </div>
      <div class="tb-app run act tb-wps">
        <svg width="26" height="26" viewBox="0 0 26 26"><rect width="26" height="26" rx="4" fill="#2a7cf0"/><path d="M5 8L10 19 13 12 16 19 21 8" fill="none" stroke="#fff" stroke-width="2.500"/><path d="M5 7H21" stroke="#fff" stroke-width="2"/></svg>
      </div>
      <div class="tb-app run tb-chat">
        <svg width="32" height="28" viewBox="0 0 32 28"><ellipse cx="12" cy="11" rx="12" ry="10.500" fill="#3fcf5a"/><path d="M5 18L4 24 10 20Z" fill="#3fcf5a"/><circle cx="8" cy="9" r="1.500" fill="#18382a"/><circle cx="15" cy="9" r="1.500" fill="#18382a"/><ellipse cx="23" cy="18" rx="9" ry="8" fill="#e8e8e8"/><path d="M27 24L29 28 23 25Z" fill="#e8e8e8"/><circle cx="20" cy="16" r="1.200" fill="#555"/><circle cx="26" cy="16" r="1.200" fill="#555"/></svg>
      </div>
      <div class="tb-right">
        <div class="cpu">48℃<br>CPU温度</div>
        <svg class="tr-chev" width="16" height="10" viewBox="0 0 16 10"><path d="M1 9L8 1 15 9" fill="none" stroke="#fff" stroke-width="1.200"/></svg>
        <svg class="tr-power" width="20" height="14" viewBox="0 0 20 14"><path d="M3 0V3M6 0V3M1 3H8V5H1ZM4 5V8" stroke="#fff"/><rect x="5" y="4" width="14" height="9" fill="#fff"/></svg>
        <svg class="tr-wifi" width="18" height="16" viewBox="0 0 18 16" fill="none" stroke="#ccc"><path d="M1 15A14 14 0 0 1 15 1M5 15A10 10 0 0 1 15 5M9 15A6 6 0 0 1 15 9"/><circle cx="15" cy="14" r="1" fill="#fff"/></svg>
        <svg class="tr-vol" width="20" height="20" viewBox="0 0 20 20" fill="none" stroke="#fff"><path d="M1 7H5L10 3V17L5 13H1ZM13 7A4 4 0 0 1 13 13M16 4A8 8 0 0 1 16 16"/></svg>
        <div class="ime">英</div>
        <div class="clock">14:55 周日<br>2022/2/6</div>
        <svg class="tr-notes" width="22" height="24" viewBox="0 0 22 24" fill="none" stroke="#ccc"><path d="M3 3V22H19V1H5V20M8 7H16M8 11H16M8 15H13"/></svg>
        <svg class="tr-chat" width="21" height="21" viewBox="0 0 21 21" fill="none" stroke="#fff"><path d="M1 1H20V17H13L10 20 7 17H1Z"/></svg>
      </div>
    </div>`;
  }

  renderDialog() {
    return html`<div class="dialog">
      <div class="d-title">
        ${sIcon(18)}<span>排序</span>
        <svg class="d-close" width="13" height="13" viewBox="0 0 13 13"><path d="M0 0L13 13M13 0L0 13" stroke="#333"/></svg>
      </div>
      <div class="d-tools">
        <div class="btn w115">
          <svg width="15" height="15" viewBox="0 0 15 15"><path d="M7.500 0V15M0 7.500H15" stroke="#33415c" stroke-width="2"/></svg>添加条件(A)
        </div>
        <div class="btn w115 ml">
          <svg width="15" height="18" viewBox="0 0 15 18" fill="none" stroke="#555"><path d="M1 3H14M5 3V1H10V3M2 3V17H13V3M5.500 6V14M9.500 6V14"/></svg>删除条件(D)
        </div>
        <div class="btn w114 ml">
          <svg width="15" height="18" viewBox="0 0 15 18" fill="none" stroke="#555"><rect x="1" y="5" width="9" height="12" rx="1"/><path d="M4 5V1H14V14H10"/></svg>复制条件(C)
        </div>
        <div class="btn-sep"></div>
        <div class="btn dis w30">
          <svg width="14" height="18" viewBox="0 0 14 18"><path d="M7 1L13 8H10V17H4V8H1Z" fill="none" stroke="#aaa"/></svg>
        </div>
        <div class="btn dis w30 ml">
          <svg width="14" height="18" viewBox="0 0 14 18"><path d="M7 17L13 10H10V1H4V10H1Z" fill="none" stroke="#aaa"/></svg>
        </div>
        <div class="btn w96 ml">选项(O)...</div>
        <div class="chk"><svg width="14" height="14" viewBox="0 0 14 14"><path d="M2 7L6 11 12 2" fill="none" stroke="#444" stroke-width="1.200"/></svg></div>
        <span class="chk-lbl">数据包含标题(H)</span>
      </div>
      <div class="d-table">
        <div class="d-hd"><div>列</div><div>排序依据</div><div>次序</div></div>
        <div class="d-row">
          <div class="d-cell">主要关键字
            <div class="combo key">类别<i class="caret"></i></div>
          </div>
          <div class="d-cell"><div class="combo basis">数值<i class="caret"></i></div></div>
          <div class="d-cell"><div class="combo order">办公用纸, 财务用品, 日用品类<i class="caret"></i></div></div>
        </div>
      </div>
      <div class="d-foot">
        <div class="btn def">确定</div>
        <div class="btn">取消</div>
      </div>
      <div class="grip"></div>
    </div>`;
  }

  renderMark() {
    // site watermark: paw, wordmark and url, laid over the window bottom right
    return html`<svg class="mark" width="370" height="180" viewBox="1460 870 370 180">
      <g>
        <ellipse cx="1605" cy="917" rx="13" ry="18" transform="rotate(-20 1605 917)"/>
        <ellipse cx="1630" cy="893" rx="13" ry="18" transform="rotate(-8 1630 893)"/>
        <ellipse cx="1660" cy="896" rx="13" ry="18" transform="rotate(8 1660 896)"/>
        <ellipse cx="1679" cy="925" rx="12" ry="17" transform="rotate(-10 1679 925)"/>
        <path d="M1640 918C1660 918 1662 940 1672 950 1686 962 1688 984 1664 982 1650 980 1630 980 1616 982 1594 984 1594 962 1606 950 1618 940 1620 918 1640 918Z"/>
      </g>
      <text class="bai" x="1477" y="982" textLength="122" lengthAdjust="spacingAndGlyphs">Bai</text>
      <text class="du" x="1613" y="975" textLength="54" lengthAdjust="spacingAndGlyphs">du</text>
      <text class="jy" x="1697" y="978" textLength="116" lengthAdjust="spacingAndGlyphs">经验</text>
      <text class="url" x="1478" y="1031" textLength="337" lengthAdjust="spacingAndGlyphs">jingyan.baidu.com</text>
    </svg>`;
  }

  render() {
    return html`
      ${this.renderTitle()}
      ${this.renderMenu()}
      ${this.renderRibbon()}
      <div class="main">
        <div class="left">
          <div class="fbar">
            <div class="namebox">A2<i class="caret"></i></div>
            <svg class="zoom" width="22" height="22" viewBox="0 0 22 22" fill="none" stroke="#556" stroke-width="1.400"><circle cx="9.500" cy="9.500" r="7.500"/><path d="M15 15L20 20M6 8H13M6 11H13"/></svg>
            <span class="fx">fx</span>
            <div class="finput">办公用纸</div>
          </div>
          <div class="sheet">
            ${this.renderGrid()}
            <div class="vs">
              <div class="vs-lines"></div>
              <div class="vs-track">
                <i class="arr-up"></i>
                <div class="vs-thumb"></div>
                <i class="arr-down"></i>
              </div>
            </div>
          </div>
          ${this.renderSheetTabs()}
        </div>
        <div class="side">
          <div class="side-lines"></div>
          <svg class="cursor" width="18" height="22" viewBox="0 0 18 22" fill="none" stroke="#33415c" stroke-width="1.400"><path d="M2 1V17L6 13 9 20 12 18.500 9 12H15Z"/></svg>
          <svg width="20" height="22" viewBox="0 0 20 22" fill="none" stroke="#666"><circle cx="4" cy="5" r="2.500"/><path d="M6.500 5H20M0 16H13"/><circle cx="14.500" cy="16" r="2.500"/></svg>
          <svg width="20" height="20" viewBox="0 0 20 20" fill="none" stroke="#888"><rect x="1" y="1" width="3" height="2"/><rect x="7" y="1" width="12" height="2"/><rect x="1" y="6" width="3" height="13"/><path d="M18 8V15H9M12 12L9 15 12 18M16 10L18 8 20 10"/></svg>
          <svg class="help" width="20" height="20" viewBox="0 0 20 20" fill="none" stroke="#555" stroke-width="1.200"><circle cx="10" cy="10" r="9"/><path d="M7 7.500C7 3.500 13 3.500 13 7.500 13 10 10 10 10 13M10 15V16"/></svg>
          <div class="more"><i></i><i></i><i></i></div>
        </div>
      </div>
      ${this.renderStatus()}
      ${this.renderTaskbar()}
      ${this.renderDialog()}
      <div class="speed"><i></i></div>
      ${this.renderMark()}
    `;
  }
}
